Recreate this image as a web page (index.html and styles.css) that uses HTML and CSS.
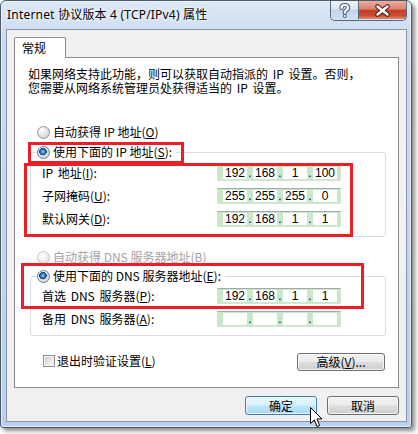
FILE: index.html
```html
<!DOCTYPE html>
<html lang="zh-CN">
<head>
  <meta charset="UTF-8">
  <meta name="viewport" content="width=device-width, initial-scale=1.0">
  <title>Internet 协议版本 4 (TCP/IPv4) 属性</title>
  <link rel="stylesheet" href="styles.css">
</head>
<body>
  <div class="window">
    <div class="titlebar">
      <span class="title">Internet 协议版本 4 (TCP/IPv4) 属性</span>
      <div class="caption-btns">
        <span class="cap help">
          <svg width="27" height="18" viewBox="0 0 27 18">
            <path d="M10.5 7 Q10.5 4 13.8 4 Q17 4 17 6.8 Q17 8.6 14.8 9.6 Q13.8 10.2 13.8 11.8" fill="none" stroke="#4b5868" stroke-width="4.2" stroke-linecap="round"/>
            <circle cx="13.8" cy="15" r="2" fill="#4b5868"/>
            <path d="M10.5 7 Q10.5 4 13.8 4 Q17 4 17 6.8 Q17 8.6 14.8 9.6 Q13.8 10.2 13.8 11.8" fill="none" stroke="#fff" stroke-width="2.2" stroke-linecap="round"/>
            <circle cx="13.8" cy="15" r="1.1" fill="#fff"/>
          </svg>
        </span>
        <span class="cap close">
          <svg width="47" height="18" viewBox="0 0 47 18">
            <path d="M18.5 5.5 L28.5 13.5 M28.5 5.5 L18.5 13.5" stroke="#5a1c12" stroke-width="4.6" stroke-linecap="round"/>
            <path d="M18.5 5.5 L28.5 13.5 M28.5 5.5 L18.5 13.5" stroke="#fff" stroke-width="2.4" stroke-linecap="round"/>
          </svg>
        </span>
      </div>
    </div>

    <div class="client">
      <div class="tabs"><span class="tab">常规</span></div>
      <div class="panel">
        <p class="intro">如果网络支持此功能，则可以获取自动指派的 IP 设置。否则，<br>您需要从网络系统管理员处获得适当的 IP 设置。</p>

        <div class="option first"><span class="radio"></span><span>自动获得 IP 地址(<u>O</u>)</span></div>

        <div class="group group-ip">
          <div class="option legend"><span class="radio on"></span><span>使用下面的 IP 地址(<u>S</u>):</span></div>
          <div class="field-row">
            <span class="label">IP 地址(<u>I</u>):</span>
            <div class="ip"><span class="seg">192</span><span class="dot">.</span><span class="seg">168</span><span class="dot">.</span><span class="seg">1</span><span class="dot">.</span><span class="seg">100</span></div>
          </div>
          <div class="field-row">
            <span class="label">子网掩码(<u>U</u>):</span>
            <div class="ip"><span class="seg">255</span><span class="dot">.</span><span class="seg">255</span><span class="dot">.</span><span class="seg">255</span><span class="dot">.</span><span class="seg">0</span></div>
          </div>
          <div class="field-row">
            <span class="label">默认网关(<u>D</u>):</span>
            <div class="ip"><span class="seg">192</span><span class="dot">.</span><span class="seg">168</span><span class="dot">.</span><span class="seg">1</span><span class="dot">.</span><span class="seg">1</span></div>
          </div>
        </div>

        <div class="option disabled"><span class="radio"></span><span>自动获得 DNS 服务器地址(<u>B</u>)</span></div>

        <div class="group group-dns">
          <div class="option legend"><span class="radio on"></span><span>使用下面的 DNS 服务器地址(<u>E</u>):</span></div>
          <div class="field-row">
            <span class="label">首选 DNS 服务器(<u>P</u>):</span>
            <div class="ip"><span class="seg">192</span><span class="dot">.</span><span class="seg">168</span><span class="dot">.</span><span class="seg">1</span><span class="dot">.</span><span class="seg">1</span></div>
          </div>
          <div class="field-row">
            <span class="label">备用 DNS 服务器(<u>A</u>):</span>
            <div class="ip"><span class="seg"></span><span class="dot">.</span><span class="seg"></span><span class="dot">.</span><span class="seg"></span><span class="dot">.</span><span class="seg"></span></div>
          </div>
        </div>

        <div class="bottom-row">
          <label class="check-label"><span class="check"></span><span>退出时验证设置(<u>L</u>)</span></label>
          <button class="btn advanced">高级(<u>V</u>)...</button>
        </div>
      </div>

      <div class="footer">
        <button class="btn hover">确定</button>
        <button class="btn">取消</button>
      </div>
    </div>

    <div class="mark mark-ip-radio"></div>
    <div class="mark mark-ip-fields"></div>
    <div class="mark mark-dns"></div>

    <svg class="cursor" width="14" height="22" viewBox="0 0 14 22">
      <path d="M0.5 0.5 V16.5 L4.3 12.9 L7 19.6 L9.6 18.6 L7 12 H12 Z" fill="#fff" stroke="#000" stroke-width="1" stroke-linejoin="miter"/>
    </svg>
  </div>
</body>
</html>
```

FILE: styles.css
```css
body {
  margin: 0;
  width: 418px;
  height: 434px;
  overflow: hidden;
  background: #fff;
  font-family: "Noto Sans CJK SC", sans-serif;
  font-size: 12px;
  color: #000;
}

.window {
  position: relative;
  width: 412px;
  height: 428px;
  box-sizing: border-box;
  border: 1px solid #4e5866;
  border-radius: 6px 6px 3px 3px;
  background: linear-gradient(to bottom, #dde8f5 0, #c8dbf0 40px, #b9d1ec 100%);
  box-shadow: 3px 3px 4px rgba(0, 0, 0, 0.45), inset 0 0 0 1px rgba(255, 255, 255, 0.55);
}

.titlebar {
  display: flex;
  align-items: flex-start;
  height: 28px;
}

.title {
  font-family: "Noto Sans", "Noto Sans CJK SC", sans-serif;
  font-size: 12px;
  line-height: 16px;
  margin: 6px 0 0 6px;
  letter-spacing: 0.2px;
  text-shadow: 0 0 6px #fff, 0 0 3px #fff;
}

.caption-btns {
  display: flex;
  margin-left: auto;
  margin-right: 4px;
  height: 19px;
  border: 1px solid #5c6877;
  border-top: none;
  border-radius: 0 0 5px 5px;
  overflow: hidden;
}

.cap {
  display: block;
  height: 18px;
}

.cap svg {
  display: block;
}

.help {
  width: 27px;
  background: linear-gradient(to bottom, #eef3fa 0, #dbe6f3 45%, #c3d4ea 50%, #cfdff1 100%);
  border-right: 1px solid #5c6877;
}

.close {
  width: 47px;
  background: linear-gradient(to bottom, #eab0a2 0, #d9806c 45%, #c3402a 52%, #c94b32 80%, #e08c68 100%);
}

.client {
  margin: 0 4px 0 5px;
  height: 393px;
  box-sizing: border-box;
  border: 1px solid #8796a8;
  background: #f0f0f0;
}

.tabs {
  display: flex;
  margin: 7px 0 -1px 7px;
}

.tab {
  position: relative;
  z-index: 1;
  width: 52px;
  height: 21px;
  box-sizing: border-box;
  padding-left: 7px;
  border: 1px solid #898c95;
  border-bottom: none;
  border-radius: 2px 2px 0 0;
  background: #fff;
  line-height: 19px;
}

.panel {
  margin-left: 7px;
  width: 385px;
  height: 331px;
  box-sizing: border-box;
  border: 1px solid #898c95;
  background: #fff;
}

.intro {
  margin: 9px 0 0 13px;
  line-height: 14px;
  word-spacing: 2px;
}

.option {
  display: flex;
  align-items: center;
  gap: 3px;
  height: 16px;
  line-height: 16px;
  padding-left: 22px;
  margin-top: 12px;
}

.option.first {
  margin-top: 29px;
}

.option.disabled {
  color: #a3a3a3;
}

.option.disabled .radio {
  border-color: #c4c4c4;
  background: radial-gradient(circle at 35% 30%, #ffffff 0, #f0f0f0 50%, #e0e0e0 100%);
}

.radio {
  flex: none;
  width: 13px;
  height: 13px;
  box-sizing: border-box;
  border-radius: 50%;
  border: 1px solid #8f9192;
  background: radial-gradient(circle at 35% 30%, #ffffff 0, #e8e8e8 45%, #c6c6c6 100%);
}

.radio.on {
  border-color: #6b7f93;
  background:
    radial-gradient(circle at 45% 42%, #a6dcfa 0, #3a8ed3 1.6px, #1c5aa0 3px, #123f74 3.6px, transparent 4px),
    radial-gradient(circle at 35% 30%, #ffffff 0, #e8e8e8 45%, #c6c6c6 100%);
}

.group {
  margin: 12px 0 0 15px;
  width: 356px;
  box-sizing: border-box;
  border: 1px solid #d5dfe5;
  border-radius: 3px;
}

.group-ip {
  padding-bottom: 9px;
}

.group-dns {
  margin-top: 11px;
  padding-bottom: 8px;
}

.option.legend {
  margin: -9px 0 0 6px;
  padding: 0 4px 0 0;
  width: fit-content;
  background: #fff;
}

.field-row {
  display: flex;
  align-items: center;
  height: 16px;
  padding-left: 11px;
  margin-top: 7px;
}

.legend + .field-row {
  margin-top: 5px;
}

.group-dns .legend + .field-row {
  margin-top: 4px;
}

.label {
  width: 175px;
  line-height: 16px;
  word-spacing: 2px;
}

.ip {
  display: flex;
  align-items: center;
  width: 124px;
  height: 16px;
  box-sizing: border-box;
  padding: 0 3px 0 5px;
  border: 1px solid #d3e6d3;
  border-top-color: #a4a9ae;
  background: #c9e7c9;
  font-family: "Liberation Sans", sans-serif;
  font-size: 12px;
}

.seg {
  width: 24px;
  height: 12px;
  line-height: 12px;
  background: #fff;
  text-align: center;
}

.dot {
  width: 6px;
  height: 12px;
  line-height: 12px;
  text-align: center;
}

.bottom-row {
  display: flex;
  justify-content: space-between;
  align-items: flex-start;
  margin: 17px 13px 0 28px;
}

.check-label {
  display: flex;
  align-items: center;
  gap: 2px;
  height: 16px;
  line-height: 16px;
}

.check {
  width: 12px;
  height: 12px;
  box-sizing: border-box;
  border: 1px solid #8f9192;
  background: linear-gradient(135deg, #cdcdcd 0, #e9e9e9 60%, #f7f7f7 100%);
  box-shadow: inset 0 0 0 1px #f4f4f4;
}

.btn {
  height: 19px;
  box-sizing: border-box;
  padding: 0;
  border: 1px solid #707070;
  border-radius: 3px;
  background: linear-gradient(to bottom, #f2f2f2 0, #ebebeb 48%, #dddddd 52%, #cfcfcf 100%);
  box-shadow: inset 0 0 0 1px rgba(255, 255, 255, 0.7);
  font-family: "Noto Sans CJK SC", sans-serif;
  font-size: 12px;
  line-height: 16px;
  color: #000;
}

.btn.advanced {
  width: 88px;
  height: 18px;
}

.btn.hover {
  border-color: #3c7fb1;
  background: linear-gradient(to bottom, #eaf6fd 0, #d9f0fc 48%, #bee6fd 52%, #a7d9f5 100%);
}

.footer {
  display: flex;
  justify-content: flex-end;
  gap: 10px;
  margin: 8px 7px 0 0;
}

.footer .btn {
  width: 72px;
}

/* red annotation frames drawn over the dialog */
.mark {
  position: absolute;
  box-sizing: border-box;
  border: 3px solid #ec1f27;
}

.mark-ip-radio {
  left: 27px;
  top: 141px;
  width: 156px;
  height: 22px;
}

.mark-ip-fields {
  left: 23px;
  top: 162px;
  width: 329px;
  height: 74px;
}

.mark-dns {
  left: 20px;
  top: 262px;
  width: 343px;
  height: 46px;
}

.cursor {
  position: absolute;
  left: 309px;
  top: 406px;
}
```
